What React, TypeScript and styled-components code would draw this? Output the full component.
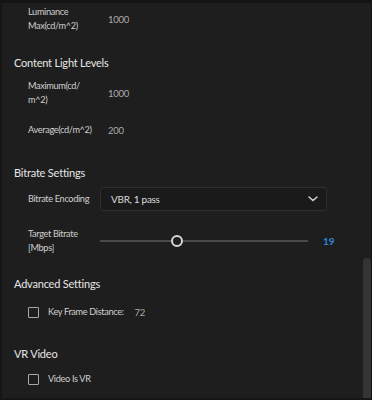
import React from 'react';
import styled, { createGlobalStyle } from 'styled-components';

const GlobalStyle = createGlobalStyle`
    html, body {
        margin: 0;
        padding: 0;
        background: #1e1e1e;
    }
`;

const StyledFrame = styled.div`
    width: 372px;
    height: 400px;
    box-sizing: border-box;
    display: flex;
    background: #1e1e1e;
    border-top: 3px solid #141414;
    border-left: 2px solid #161616;
    border-right: 1px solid #141414;
    border-bottom: 2px solid #161616;
    overflow: hidden;
    font-family: Lato, "Open Sans", sans-serif;
`;

const StyledContent = styled.div`
    flex: 1;
    padding-top: 1px;
`;

const StyledScrollTrack = styled.div`
    width: 8px;
    display: flex;
    flex-direction: column;
    background: #1e1e1e;
`;

const StyledScrollThumb = styled.div`
    margin-top: 255px;
    flex: 1;
    background: #343434;
    border-radius: 4px 4px 0 0;
`;

const StyledHeading = styled.div<{ $top: number }>`
    margin-top: ${p => p.$top}px;
    padding-left: 12px;
    height: 20px;
    line-height: 20px;
    font-size: 11px;
    letter-spacing: -0.2px;
    color: #e6e6e6;
`;

const StyledRow = styled.div<{ $top: number; $height?: number }>`
    margin-top: ${p => p.$top}px;
    height: ${p => p.$height ?? 14}px;
    padding-left: 26px;
    display: grid;
    grid-template-columns: 72px 1fr;
    align-items: center;
`;

const StyledLabel = styled.div`
    font-size: 9.2px;
    line-height: 14px;
    letter-spacing: -0.35px;
    white-space: nowrap;
    color: #cfcfcf;
`;

const StyledValue = styled.div`
    padding-left: 8px;
    font-size: 9.5px;
    letter-spacing: -0.3px;
    color: #ababab;
`;

const StyledSelect = styled.div`
    margin-right: 36px;
    height: 24px;
    box-sizing: border-box;
    border: 1px solid #2f2f2f;
    border-radius: 3px;
    background: #1a1a1a;
    display: flex;
    align-items: center;
    justify-content: space-between;
    padding: 0 8px 0 10px;
    font-size: 10px;
    letter-spacing: -0.3px;
    color: #dcdcdc;
`;

const StyledSliderWrap = styled.div`
    display: flex;
    align-items: center;
`;

const StyledTrack = styled.div`
    position: relative;
    width: 208px;
    height: 2px;
    background: #4a4a4a;
`;

const StyledThumb = styled.div`
    position: absolute;
    top: -5px;
    width: 12px;
    height: 12px;
    box-sizing: border-box;
    border: 2px solid #d6d6d6;
    border-radius: 50%;
    background: #1e1e1e;
`;

const StyledSliderValue = styled.span`
    margin-left: 15px;
    font-size: 10px;
    font-weight: 700;
    color: #2f86db;
`;

const StyledCheckRow = styled.div<{ $top: number }>`
    margin-top: ${p => p.$top}px;
    height: 14px;
    padding-left: 26px;
    display: flex;
    align-items: center;
`;

const StyledBox = styled.span`
    width: 11px;
    height: 11px;
    box-sizing: border-box;
    border: 1.5px solid #a8a8a8;
    border-radius: 1px;
    margin-right: 9px;
`;

const StyledCheckValue = styled.span`
    margin-left: 11px;
    font-size: 9.5px;
    letter-spacing: -0.3px;
    color: #ababab;
`;

const Chevron = () => (
    <svg width="10" height="6" viewBox="0 0 10 6">
        <path d="M1 1 L5 4.5 L9 1" fill="none" stroke="#cfcfcf" strokeWidth="1.6" strokeLinecap="round" />
    </svg>
);

const Slider = ({ value, ratio }: { value: number; ratio: number }) => (
    <StyledSliderWrap>
        <StyledTrack>
            <StyledThumb style={{ left: ratio * 208 - 6 }} />
        </StyledTrack>
        <StyledSliderValue>{value}</StyledSliderValue>
    </StyledSliderWrap>
);

const App = () => (
    <>
        <GlobalStyle />
        <StyledFrame>
            <StyledContent>
                <StyledRow $top={1} $height={28}>
                    <StyledLabel>Luminance<br />Max(cd/m^2)</StyledLabel>
                    <StyledValue>1000</StyledValue>
                </StyledRow>

                <StyledHeading $top={20}>Content Light Levels</StyledHeading>
                <StyledRow $top={6} $height={28}>
                    <StyledLabel>Maximum(cd/<br />m^2)</StyledLabel>
                    <StyledValue>1000</StyledValue>
                </StyledRow>
                <StyledRow $top={16}>
                    <StyledLabel>Average(cd/m^2)</StyledLabel>
                    <StyledValue>200</StyledValue>
                </StyledRow>

                <StyledHeading $top={26}>Bitrate Settings</StyledHeading>
                <StyledRow $top={4} $height={24}>
                    <StyledLabel>Bitrate Encoding</StyledLabel>
                    <StyledSelect>
                        <span>VBR, 1 pass</span>
                        <Chevron />
                    </StyledSelect>
                </StyledRow>
                <StyledRow $top={15} $height={29}>
                    <StyledLabel>Target Bitrate<br />[Mbps]</StyledLabel>
                    <Slider value={19} ratio={0.37} />
                </StyledRow>

                <StyledHeading $top={19}>Advanced Settings</StyledHeading>
                <StyledCheckRow $top={11}>
                    <StyledBox />
                    <StyledLabel>Key Frame Distance:</StyledLabel>
                    <StyledCheckValue>72</StyledCheckValue>
                </StyledCheckRow>

                <StyledHeading $top={25}>VR Video</StyledHeading>
                <StyledCheckRow $top={8}>
                    <StyledBox />
                    <StyledLabel>Video Is VR</StyledLabel>
                </StyledCheckRow>
            </StyledContent>
            <StyledScrollTrack>
                <StyledScrollThumb />
            </StyledScrollTrack>
        </StyledFrame>
    </>
);

export default App;
